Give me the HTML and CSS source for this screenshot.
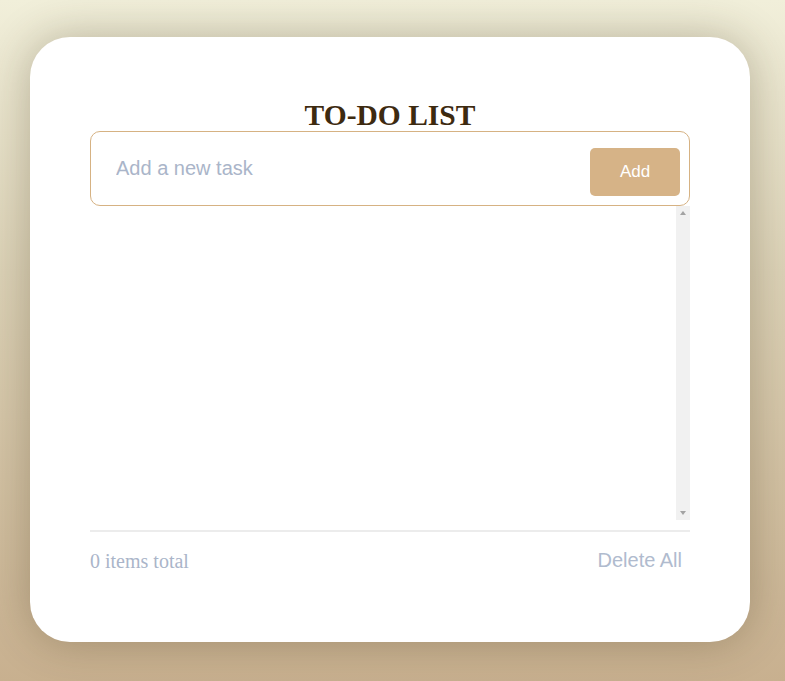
FILE: index.html
```html
<!DOCTYPE html>
<html>
<head>
<meta charset="utf-8">
<link rel="stylesheet" href="styles.css">
</head>
<body>
<div class="card">
  <h1 class="title">TO-DO LIST</h1>
  <div class="input-row">
    <input class="task-input" type="text" placeholder="Add a new task">
    <button class="add-btn">Add</button>
  </div>
  <div class="list-wrap">
    <ul class="list"></ul>
    <div class="scrollbar">
      <span class="arrow arrow-up"></span>
      <span class="arrow arrow-down"></span>
    </div>
  </div>
  <div class="footer">
    <span class="count">0 items total</span>
    <button class="delete-all">Delete All</button>
  </div>
</div>
</body>
</html>
```
FILE: styles.css
```css
html, body {
  margin: 0;
  height: 100%;
}
body {
  background: linear-gradient(to bottom, #f1efda 0%, #dcd2b7 40%, #c8b08f 100%);
  padding: 37px 35px 39px 30px;
  box-sizing: border-box;
  overflow: hidden;
}
.card {
  width: 720px;
  height: 605px;
  background: #fff;
  border-radius: 40px;
  box-shadow: 0 0 45px rgba(60, 45, 20, 0.3);
  box-sizing: border-box;
  padding: 62px 60px 0 60px;
  display: flex;
  flex-direction: column;
}
.title {
  margin: 0;
  text-align: center;
  font-family: "Liberation Serif", serif;
  font-weight: bold;
  font-size: 29.5px;
  line-height: 32px;
  color: #3d2a10;
}
.input-row {
  height: 75px;
  border: 1px solid #d6b283;
  border-radius: 10px;
  box-sizing: border-box;
  display: flex;
  align-items: center;
  padding: 0 9px 0 25px;
}
.task-input {
  flex: 1;
  border: none;
  outline: none;
  font-family: "Liberation Sans", sans-serif;
  font-size: 20px;
  color: #333;
  padding: 0;
  margin-top: 0;
  background: transparent;
}
.task-input::placeholder {
  color: #aab5c9;
}
.add-btn {
  width: 90px;
  height: 48px;
  margin-top: 7px;
  background: #d6b387;
  border: none;
  border-radius: 5px;
  color: #fff;
  font-family: "Liberation Sans", sans-serif;
  font-size: 17px;
}
.list-wrap {
  height: 314px;
  display: flex;
}
.list {
  flex: 1;
  margin: 0;
  padding: 0;
  list-style: none;
  overflow-y: auto;
}
.scrollbar {
  width: 14px;
  background: #f1f1f1;
  display: flex;
  flex-direction: column;
  justify-content: space-between;
  align-items: center;
  padding: 5px 0;
}
.arrow {
  width: 0;
  height: 0;
  border-left: 3px solid transparent;
  border-right: 3px solid transparent;
}
.arrow-up {
  border-bottom: 4px solid #a3a3a3;
}
.arrow-down {
  border-top: 4px solid #a3a3a3;
}
.footer {
  margin-top: 10px;
  border-top: 2px solid #ececec;
  display: flex;
  justify-content: space-between;
  align-items: center;
  padding: 16px 0 0 0;
}
.count {
  font-family: "Liberation Serif", serif;
  font-size: 20px;
  color: #aab5c9;
  margin-top: 2px;
}
.delete-all {
  background: none;
  border: none;
  padding: 0 8px 0 0;
  font-family: "Liberation Sans", sans-serif;
  font-size: 20px;
  color: #b0bbce;
}
```
